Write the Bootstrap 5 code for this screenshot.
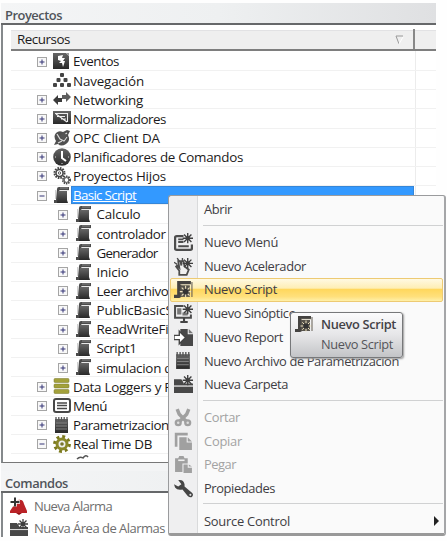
<!DOCTYPE html>
<html lang="es">
<head>
<meta charset="utf-8">
<meta name="viewport" content="width=device-width, initial-scale=1">
<title>Proyectos</title>
<link href="https://cdn.jsdelivr.net/npm/bootstrap@5.3.0/dist/css/bootstrap.min.css" rel="stylesheet">
<style>
body{width:447px;height:541px;background:#fefefe;font-family:"Open Sans","Noto Sans",sans-serif;font-size:13.4px;line-height:1;color:#1c1a20;padding:3px 0 0 1px}
svg{display:block;flex:none}
.shell{width:435px;background:#f3f4f5;height:534px}
.bar-title{height:22px;background:linear-gradient(90deg,#f4f5f6,#eef0f1 50%,#dfe0e2);border-bottom:2px solid #66686a;padding:5px 0 0 4px;font-weight:600;font-size:12.9px;color:#50545a;white-space:nowrap}
.pane-gap{height:8px}
.tree-panel{height:438px;background:#fff;border-left:2px solid #85898c;border-bottom:1px solid #777;padding:5px 0 0 8px}
.tree-head{height:21px;background:#efefef;border-top:1px solid #e2e2e4;border-bottom:2px solid #7e7e7e}
.head-name{width:404px;height:20px;margin-top:-2px;border-right:2px solid #888;padding:2px 9px 0 6px}
.tree-grid{height:411px;padding-top:1px;background:linear-gradient(90deg,transparent 404px,#ececec 404px,#ececec 405px,transparent 405px)}
.tree-row{height:19.15px;border-bottom:1px solid #f1f1f1;padding-left:26px;white-space:nowrap}
.child{padding-left:47px}
.child .tree-text{padding-left:3.5px}
.child .ico{margin-left:1px}
.plus{width:10px;height:10px;margin-right:6px;margin-top:1px}
.ico{width:18px;height:18px}
.tree-text{height:18px;padding:2px 0 0 2px;width:343px}
.picked{background:#3399ff;color:#fff;text-decoration:underline;border:1px solid #3586d8;padding:1px 0 0 1px}
.tail-bit{width:18px;height:6px;margin-left:64px}
.cmd-panel{border-left:2px solid #85898c;background:#fff;height:44px;color:#6e6e6e;font-size:13px}
.cmd-row{height:22px;padding:4px 0 0 7px}
.cmd-row .ico{margin-right:6px}
.ctx{left:168px;top:195px;width:278px;height:341px;border:1px solid #9a9b9d;border-right:2px solid #a5a6a8;border-bottom:3px solid #999;border-radius:3px;background:linear-gradient(90deg,#efeff0 0,#efeff0 28px,#d9dadb 28px,#d9dadb 29px,#fafafa 29px);padding:2px 1px 0 1px;font-size:12.9px;color:#403d43}
.ctx-row{height:23.7px;padding-left:4px;white-space:nowrap}
.ctx-row .ico{margin-right:11px;width:19px;height:19px}
.off{color:#a3a3a3}
.hot{border:1px solid #edca73;border-radius:2px;background:linear-gradient(#fff9e2,#feeeb4 42%,#ffd75c 46%,#ffe07c 80%,#fff0a9);padding-left:3px}
.rule{height:1px;background:#d0d1d2;margin:3px 0 5px 33px}
.tip{left:290px;top:312px;width:113px;height:46px;border:1px solid #77787a;border-radius:3px;background:linear-gradient(#fbfbfc,#e6e6e8 50%,#c3c4c7);box-shadow:1px 1px 2px #999;padding:2px 0 0 4px;font-size:12.8px;color:#55555a}
.tip b{font-weight:600;color:#434247;margin-left:8px}
.tip-note{padding:5px 0 0 26px}
</style>
</head>
<body class="position-relative overflow-hidden">
<svg width="0" height="0" class="position-absolute" aria-hidden="true">
<defs>
<linearGradient id="dk" x2="0" y2="1"><stop stop-color="#666"/><stop offset="1" stop-color="#292929"/></linearGradient>
<symbol id="plus" viewBox="0 0 10 10"><rect x=".5" y=".5" width="9" height="9" fill="#f8f8f8" stroke="#a5a5a5"/><path d="M2.500 5h5M5 2.500v5" stroke="#353577"/></symbol>
<symbol id="minus" viewBox="0 0 10 10"><rect x=".5" y=".5" width="9" height="9" fill="#f8f8f8" stroke="#a5a5a5"/><path d="M2.500 5h5" stroke="#353577"/></symbol>
<symbol id="event" viewBox="0 0 18 18"><path d="M0 1h13l3 3v13H0z" fill="url(#dk)"/><path d="m13 1 3 3V1z" fill="#999"/><path d="m5 4 5-1-1 3 3 0-2 3 2 0-2 6-1-4-3 0 2-2-3-1z" fill="#fff"/></symbol>
<symbol id="nav" viewBox="0 0 18 18"><g fill="#444"><rect x="7" y="2" width="4" height="4" rx="1"/><rect x="3.500" y="7" width="4" height="4" rx="1"/><rect x="10.500" y="7" width="4" height="4" rx="1"/><rect x="0" y="12" width="4" height="4" rx="1"/><rect x="7" y="12" width="4" height="4" rx="1"/><rect x="14" y="12" width="4" height="4" rx="1"/></g></symbol>
<symbol id="net" viewBox="0 0 18 18"><path d="m0 10 5-5v3h4v4H5v3z" fill="#3b3b3b"/><path d="m18 7-5-5v3H9v4h4v3z" fill="#606060"/></symbol>
<symbol id="norm" viewBox="0 0 18 18"><path d="M0 2h18v13H0z" fill="url(#dk)"/><path d="M2 4.500h12.500v8.500M4 7.500h8M8 10h5M3 5l11 8" fill="none" stroke="#eee" stroke-width="1.100"/></symbol>
<symbol id="opc" viewBox="0 0 18 18"><path d="M3 4Q6 1 10 3l4-2 3 1-2 4q3 6-2 9-5 3-8 0l-4 1 2-4Q0 7 3 4z" fill="#505050"/><path d="m4 5 3 5 4 2 3-4M5 14l4-2M14 4l-3 2" fill="none" stroke="#ddd" stroke-width="1.200"/><path d="m7 7 4-4 3 4-3 4z" fill="#555"/></symbol>
<symbol id="clock" viewBox="0 0 18 18"><circle cx="9" cy="9" r="8.800" fill="url(#dk)"/><path d="M9 3v7l4 3" fill="none" stroke="#fff" stroke-width="2"/><path d="M2 9h1M15 9h1M9 15v1" stroke="#ddd"/></symbol>
<symbol id="gears" viewBox="0 0 18 18"><g fill="none"><circle cx="6.500" cy="6" r="5" stroke="#444" stroke-width="2" stroke-dasharray="1.600 1"/><circle cx="6.500" cy="6" r="3.500" stroke="#444" stroke-width="1.500"/><circle cx="6.500" cy="6" r="1.200" stroke="#555"/><circle cx="13.500" cy="13" r="3.600" stroke="#444" stroke-width="1.800" stroke-dasharray="1.500 .8"/><circle cx="13.500" cy="13" r="2.400" stroke="#444"/></g></symbol>
<symbol id="script" viewBox="0 0 18 18"><path d="M4 3q0-2 2-2h10v3H7v11q0 2-2 2H1v-3h2z" fill="#4c4c4c"/><path d="M5 5h9v9l1 3H4z" fill="url(#dk)"/><path d="M7 2h8" stroke="#888"/><path d="M6 4.500h10" stroke="#ddd" stroke-width=".7"/><path d="M2.500 4v9" stroke="#bbb" stroke-width=".7"/></symbol>
<symbol id="db" viewBox="0 0 18 18"><g fill="#a3a13b" stroke="#777628" stroke-width=".5"><rect x="1" y="1.500" width="15" height="4" rx="1"/><rect x="1" y="7" width="15" height="4" rx="1"/><rect x="1" y="12.500" width="15" height="4" rx="1"/></g></symbol>
<symbol id="menu" viewBox="0 0 18 18"><rect x="1" y="2" width="16" height="13" rx="2" fill="#fff" stroke="#484848" stroke-width="2"/><path d="M4 6h10M4 8.500h10M4 11.500h10" stroke="#484848" stroke-width="1.500"/></symbol>
<symbol id="pad" viewBox="0 0 18 18"><path d="M2 3h13v14H2z" fill="url(#dk)"/><path d="M3 1v4M5.800 1v4M8.500 1v4M11.200 1v4M14 1v4" stroke="#555" stroke-width="1.300"/><path d="M3 7h11M3 10h11M3 13h11" stroke="#888" stroke-width=".9"/></symbol>
<symbol id="gear" viewBox="0 0 18 18"><circle cx="9" cy="9" r="7.200" fill="none" stroke="#7b791d" stroke-width="3.400" stroke-dasharray="2.800 2.854"/><circle cx="9" cy="9" r="5" fill="#eee" stroke="#8a882a" stroke-width="3"/><circle cx="9" cy="9" r="1.800" fill="#77752d"/></symbol>
<symbol id="star" viewBox="0 0 10 10"><path d="M5 0v10M0 5h10M1.500 1.500l7 7M8.500 1.500l-7 7" stroke="#3e3e3e" stroke-width="1.300"/><circle cx="5" cy="5" r="2" fill="#3e3e3e"/></symbol>
<symbol id="nmenu" viewBox="0 0 18 18"><path d="M9 3H2.500Q1 3 1 4.500v10Q1 16 2.500 16h13q1.500 0 1.500-1.500V11" fill="none" stroke="#4c4c4c" stroke-width="2.200"/><path d="M4 6h5M4 8.500h5M4 12.500h10" stroke="#4c4c4c" stroke-width="1.800"/><use href="#star" x="8" y="0" width="10" height="10"/></symbol>
<symbol id="nacc" viewBox="0 0 18 18"><path d="M5 17v-4L2 9l1-1 2 2-1-6 2 0 1 4 0-4 2 0 1 5 4 3-2 5z" fill="#f0f0f0" stroke="#4c4c4c" stroke-width="1.700"/><path d="M0 5l3 2M3 1l2 3M8 1v3" stroke="#4c4c4c" stroke-width="1.300"/><use href="#star" x="8" y="1" width="10" height="10"/></symbol>
<symbol id="nscript" viewBox="0 0 18 18"><path d="M3 1h13v3H7v11q0 2-2 2H0v-3h3z" fill="#454341"/><path d="M6 5h9v11H6z" fill="#57534b"/><path d="M6 4.300h10" stroke="#ccc2a9" stroke-width=".7"/><path d="M11 5.500v11M5.500 11h11M7.300 7.300l7.400 7.400M14.700 7.300l-7.400 7.400" stroke="#eee2bf" stroke-width="1"/><circle cx="11" cy="11" r="2.800" fill="#333"/><path d="M17 2v14" stroke="#625c53"/></symbol>
<symbol id="nsyn" viewBox="0 0 18 18"><path d="M9 2H1v11h15v-3" fill="none" stroke="#4c4c4c" stroke-width="1.900"/><path d="M6 17h7M9.500 13v4" fill="none" stroke="#444" stroke-width="2"/><path d="M3 4h4v6H3zM8 8h5v3H8z" fill="#777"/><use href="#star" x="8" y="0" width="10" height="10"/></symbol>
<symbol id="nrep" viewBox="0 0 18 18"><path d="M7 1h6v5h5v11H6V1z" fill="#484848"/><path d="m14 1 4 4h-4z" fill="#777"/><path d="M0 7h5V3l6 6-6 6v-4H0z" fill="#fff" stroke="#444" stroke-width="1.300"/></symbol>
<symbol id="nfold" viewBox="0 0 18 18"><path d="M0 4h7l2 3v3H0zM0 11h18v6H0zM9 8h9v2H9z" fill="#484848"/><path d="M0 10.600h18" stroke="#ccc" stroke-width=".8"/><use href="#star" x="8" y="0" width="10" height="10"/></symbol>
<symbol id="cut" viewBox="0 0 18 18"><path d="M3 1l2 5 7 7M14 1l-2 5-7 7" fill="none" stroke="#a0a0a0" stroke-width="3.300"/><circle cx="4" cy="14" r="2.300" fill="#ddd" stroke="#a0a0a0" stroke-width="2.200"/><circle cx="13" cy="14" r="2.300" fill="#ddd" stroke="#a0a0a0" stroke-width="2.200"/></symbol>
<symbol id="copy" viewBox="0 0 18 18"><path d="M2 14V2h11" fill="none" stroke="#a0a0a0" stroke-width="2.500"/><path d="M5 5h7v5h5v7H5zM13 5l4 4h-4z" fill="#a0a0a0"/></symbol>
<symbol id="paste" viewBox="0 0 18 18"><path d="M1 3h3l1-2h4l1 2h3v5H8v8H1z" fill="#a0a0a0"/><path d="M4 5h6" stroke="#eee" stroke-width="1.500"/><path d="M9 9h4v3h4v5H9zM14 9l3 2h-3z" fill="#a0a0a0"/></symbol>
<symbol id="wrench" viewBox="0 0 18 18"><path d="M4 1q5-1 6 4 0 2 0 2l7 6q2 2 0 4-2 1-4-1L8 10Q3 11 1 8L0 5l4 2 3-2z" fill="#454545"/><circle cx="15.500" cy="15" r="1" fill="#ddd"/></symbol>
<symbol id="alarm" viewBox="0 0 18 18"><path d="M0 14 4 8q2-6 7-5 2 0 3 4l3 7v2H0z" fill="#ba2227"/><path d="M6 16h6l-3 2z" fill="#8e1015"/><path d="M5 0v9.500M0 5h10" stroke="#fff" stroke-width="3.500"/><path d="M5 .5v9M.5 5h9" stroke="#333" stroke-width="2"/></symbol>
<symbol id="bit" viewBox="0 0 18 6"><path d="M2 5q3-3 6-1 3-4 5-1" fill="none" stroke="#555" stroke-width="1.500"/></symbol>
</defs></svg>

<main class="shell">
  <div class="bar-title d-flex align-items-center"><span data-w="57">Proyectos</span></div>
  <section class="tree-panel">
    <div class="tree-head"><div class="head-name d-flex justify-content-between align-items-center"><span data-w="53">Recursos</span><svg width="9" height="11" viewBox="0 0 9 11"><path d="M8 1H1l3 8" fill="none" stroke="#999"/><path d="m8 2-4 7" stroke="#fff"/></svg></div></div>
    <div class="tree-grid overflow-hidden" id="tree"></div>
  </section>
  <div class="pane-gap"></div>
  <div class="bar-title d-flex align-items-center"><span data-w="63">Comandos</span></div>
  <section class="cmd-panel">
    <div class="cmd-row d-flex align-items-center"><svg class="ico"><use href="#alarm"/></svg><span data-w="78">Nueva Alarma</span></div>
    <div class="cmd-row d-flex align-items-center"><svg class="ico"><use href="#nfold"/></svg><span data-w="131">Nueva Área de Alarmas</span></div>
  </section>
</main>
<nav class="ctx position-absolute" id="ctx"></nav>
<div class="tip position-absolute"><div class="d-flex align-items-center"><svg class="ico"><use href="#nscript"/></svg><b data-w="75">Nuevo Script</b></div><div class="tip-note"><span data-w="72">Nuevo Script</span></div></div>

<script>
const tree=[["event","Eventos",46],["nav","Navegación",71],["net","Networking",70],["norm","Normalizadores",93],["opc","OPC Client DA",87],["clock","Planificadores de Comandos",170],["gears","Proyectos Hijos",93],["script","Basic Script",63],["script","Calculo",44,1],["script","controlador",69,1],["script","Generador",61,1],["script","Inicio",32,1],["script","Leer archivos",78,1],["script","PublicBasicScript",104,1],["script","ReadWriteFile",82,1],["script","Script1",40,1],["script","simulacion de",83,1],["db","Data Loggers y Reports",138],["menu","Menú",34],["pad","Parametrizaciones",109],["gear","Real Time DB",79]];
document.getElementById("tree").innerHTML=tree.map(([icon,text,w,child])=>{
  const open=text==="Basic Script"||text==="Real Time DB";
  const box=icon==="nav"?'<span class="plus"></span>':`<svg class="plus"><use href="#${open?"minus":"plus"}"/></svg>`;
  return `<div class="tree-row d-flex align-items-center ${child?"child":""}">${box}<svg class="ico"><use href="#${icon}"/></svg><div class="tree-text d-flex align-items-center ${text==="Basic Script"?"picked":""}"><span data-w="${w}">${text}</span></div></div>`;
}).join("")+'<svg class="tail-bit"><use href="#bit"/></svg>';
const items=[["","Abrir",28],0,["nmenu","Nuevo Menú",74],["nacc","Nuevo Acelerador",102],["nscript","Nuevo Script",73],["nsyn","Nuevo Sinóptico",92],["nrep","Nuevo Report",79],["pad","Nuevo Archivo de Parametrización",195],["nfold","Nueva Carpeta",84],0,["cut","Cortar",36],["copy","Copiar",38],["paste","Pegar",32],["wrench","Propiedades",71],0,["","Source Control",86]];
document.getElementById("ctx").innerHTML=items.map(it=>{
  if(!it)return '<div class="rule"></div>';
  const [icon,text,w]=it;
  const cls=(["Cortar","Copiar","Pegar"].includes(text)?"off ":"")+(text==="Nuevo Script"?"hot":"");
  const arrow=text==="Source Control"?'<svg class="ms-auto me-1" width="5" height="10" viewBox="0 0 5 10"><path d="m0 0 5 5-5 5z" fill="#222"/></svg>':"";
  return `<div class="ctx-row d-flex align-items-center ${cls}"><svg class="ico">${icon?`<use href="#${icon}"/>`:""}</svg><span data-w="${w}">${text}</span>${arrow}</div>`;
}).join("");
document.querySelectorAll("[data-w]").forEach(el=>{
  el.style.letterSpacing=(+el.dataset.w-el.getBoundingClientRect().width)/el.textContent.length+"px";
});
</script>
<script src="https://cdn.jsdelivr.net/npm/bootstrap@5.3.0/dist/js/bootstrap.bundle.min.js"></script>
</body>
</html>
